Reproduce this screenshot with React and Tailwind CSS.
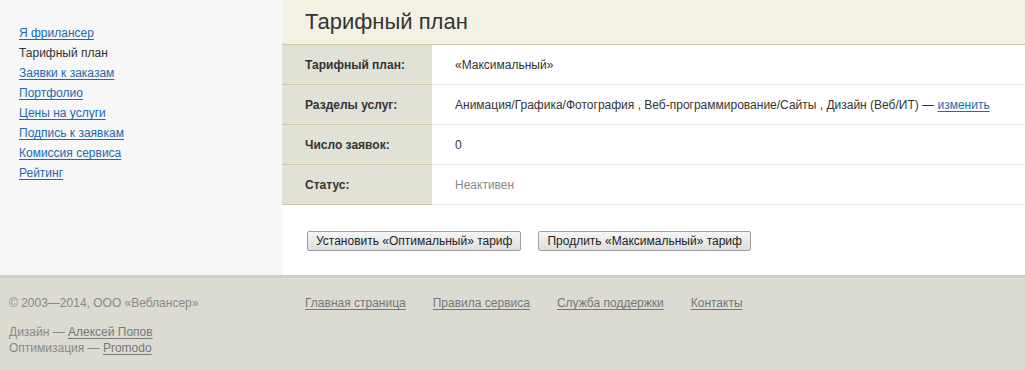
import React from 'react';

const menu = [
  { label: 'Я фрилансер', link: true },
  { label: 'Тарифный план', link: false },
  { label: 'Заявки к заказам', link: true },
  { label: 'Портфолио', link: true },
  { label: 'Цены на услуги', link: true },
  { label: 'Подпись к заявкам', link: true },
  { label: 'Комиссия сервиса', link: true },
  { label: 'Рейтинг', link: true },
];

const rows = [
  { label: 'Тарифный план:', value: '«Максимальный»' },
  { label: 'Разделы услуг:', value: 'sections' },
  { label: 'Число заявок:', value: '0' },
  { label: 'Статус:', value: 'Неактивен', muted: true },
];

const App = () => {
  return (
    <div className="min-h-[370px] bg-[#dcdbd1] text-[12px] text-[#333]" style={{ fontFamily: '"Liberation Sans", Arial, sans-serif' }}>
      <div className="flex h-[275px]">
        {/* Sidebar */}
        <div className="w-[282px] bg-[#f7f7f7] pl-[19px] pt-[23px]">
          <ul>
            {menu.map((m) => (
              <li key={m.label} className="h-[20px] leading-[20px]">
                {m.link ? (
                  <a href="#" className="text-[#1a6bb0] underline underline-offset-2">{m.label}</a>
                ) : (
                  <span className="text-[#333]">{m.label}</span>
                )}
              </li>
            ))}
          </ul>
        </div>

        {/* Main */}
        <div className="flex-1 bg-white">
          <div className="h-[45px] bg-[#f3f1e4] border-b border-[#c9c8a3] pl-[23px] flex items-center">
            <h1 className="text-[22px] text-[#333] leading-none pb-[1px]">Тарифный план</h1>
          </div>
          <div>
            {rows.map((r) => (
              <div key={r.label} className="flex h-[40px]">
                <div className="w-[150px] bg-[#e2e1d5] border-b border-[#c9c8a3] pl-[23px] flex items-center font-bold text-[#333]">
                  {r.label}
                </div>
                <div className={`flex-1 border-b border-[#ebeadb] pl-[23px] flex items-center ${r.muted ? 'text-[#888]' : 'text-[#333]'}`}>
                  {r.value === 'sections' ? (
                    <span>
                      Анимация/Графика/Фотография , Веб-программирование/Сайты , Дизайн (Веб/ИТ) —{' '}
                      <a href="#" className="text-[#1a6bb0] underline underline-offset-2">изменить</a>
                    </span>
                  ) : (
                    r.value
                  )}
                </div>
              </div>
            ))}
          </div>
          <div className="flex gap-[17px] pl-[25px] pt-[26px]">
            <button className="h-[20px] px-[8px] border border-[#a0a0a0] rounded-[2px] bg-gradient-to-b from-[#f6f6f6] to-[#dedede] text-[12px] text-[#222] leading-none">
              Установить «Оптимальный» тариф
            </button>
            <button className="h-[20px] px-[8px] border border-[#a0a0a0] rounded-[2px] bg-gradient-to-b from-[#f6f6f6] to-[#dedede] text-[12px] text-[#222] leading-none">
              Продлить «Максимальный» тариф
            </button>
          </div>
        </div>
      </div>

      {/* Footer */}
      <div className="border-t-[3px] border-[#cfcec4] flex text-[#888] pt-[15px]">
        <div className="w-[282px] pl-[9px]">
          <p className="leading-[20px]">© 2003—2014, ООО «Веблансер»</p>
          <p className="leading-[16px] mt-[11px]">
            Дизайн — <a href="#" className="text-[#777] underline underline-offset-2">Алексей Попов</a>
          </p>
          <p className="leading-[16px]">
            Оптимизация — <a href="#" className="text-[#777] underline underline-offset-2">Promodo</a>
          </p>
        </div>
        <div className="pl-[23px] flex gap-[27px] leading-[20px] h-[20px]">
          {['Главная страница', 'Правила сервиса', 'Служба поддержки', 'Контакты'].map((l) => (
            <a key={l} href="#" className="text-[#777] underline underline-offset-2">{l}</a>
          ))}
        </div>
      </div>
    </div>
  );
};

export default App;
